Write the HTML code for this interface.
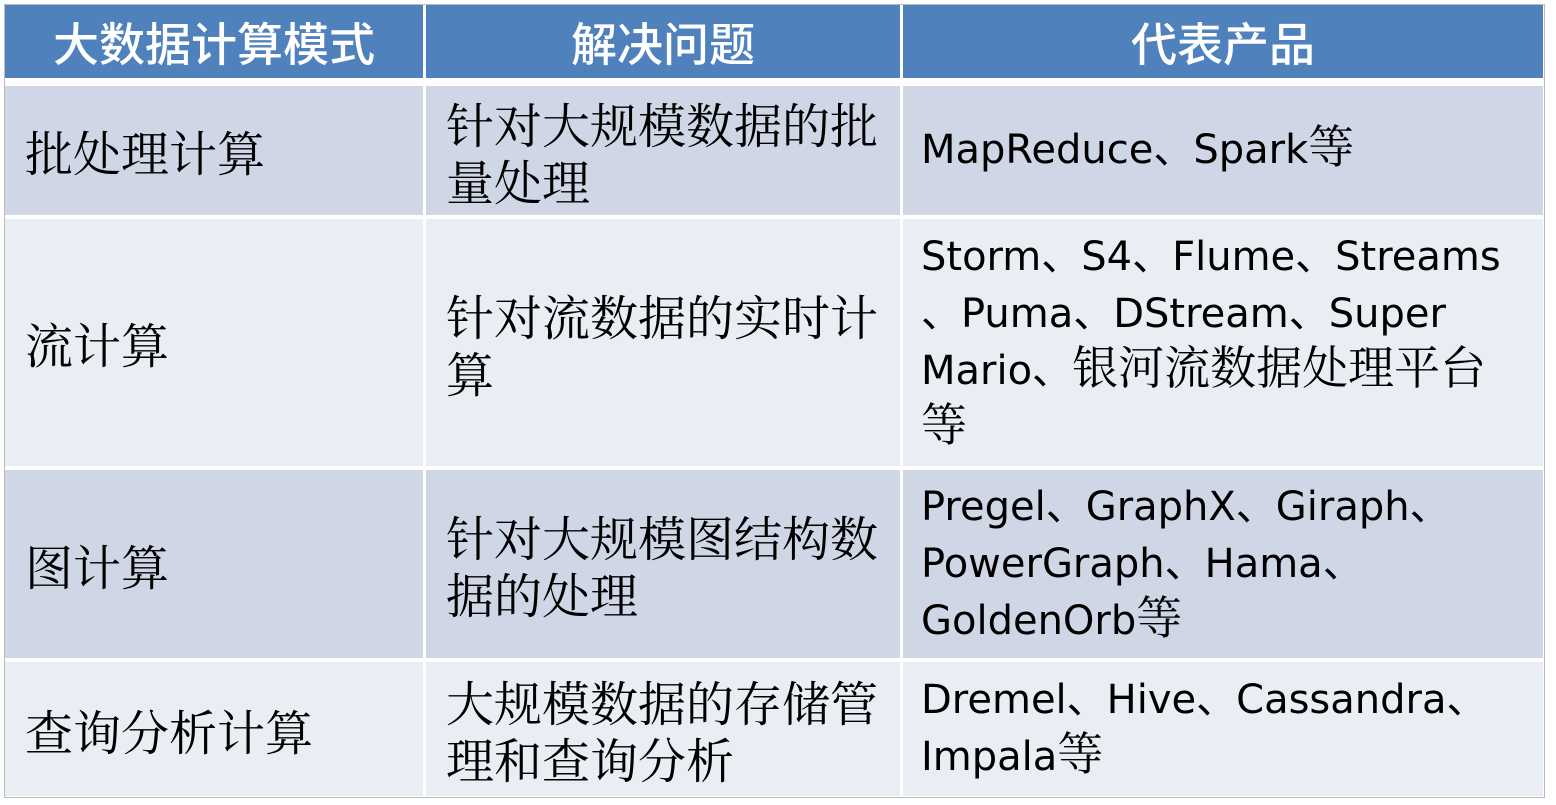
<!DOCTYPE html>
<html><head><meta charset="utf-8"><style>
body{margin:0;width:1556px;height:805px;background:#fff;position:relative;overflow:hidden}
.c{position:absolute;box-sizing:border-box;display:flex;align-items:center;color:#000}
.h{background:#4f81bd;color:#fff;justify-content:center;font-size:46px;font-family:"Noto Sans CJK SC",sans-serif;font-weight:500}
.a{background:#cfd7e7}.b{background:#e9edf4}
.z{font-family:"Noto Serif CJK SC","Noto Serif CJK JP",serif;font-size:48px;line-height:57px;padding-left:20px;white-space:nowrap}
.e{font-family:"DejaVu Sans","Noto Sans CJK SC",sans-serif;font-size:40px;line-height:57px;padding-left:18px;padding-right:10px;white-space:nowrap}
.e>div>div{height:57px;line-height:57px;overflow:visible}
.k{font-size:46px;font-family:"Noto Serif CJK SC",serif;line-height:0}
</style></head><body>
<div style="position:absolute;left:4px;top:4px;width:1541px;height:794px;border:1px solid #bbb;box-sizing:border-box"></div>
<div class="c h" style="left:5px;top:5px;width:418px;height:73px">大数据计算模式</div>
<div class="c h" style="left:426px;top:5px;width:474px;height:73px">解决问题</div>
<div class="c h" style="left:903px;top:5px;width:640px;height:73px">代表产品</div>

<div class="c a z" style="left:5px;top:86px;width:418px;height:129px">批处理计算</div>
<div class="c a z" style="left:426px;top:86px;width:474px;height:129px"><div>针对大规模数据的批<br>量处理</div></div>
<div class="c a e" style="left:903px;top:86px;width:640px;height:129px"><div><div>MapReduce、Spark<span class="k">等</span></div></div></div>

<div class="c b z" style="left:5px;top:219px;width:418px;height:247px">流计算</div>
<div class="c b z" style="left:426px;top:219px;width:474px;height:247px"><div>针对流数据的实时计<br>算</div></div>
<div class="c b e" style="left:903px;top:219px;width:640px;height:247px"><div><div>Storm、S4、Flume、Streams</div><div>、Puma、DStream、Super</div><div>Mario、<span class="k">银河流数据处理平台</span></div><div><span class="k">等</span></div></div></div>

<div class="c a z" style="left:5px;top:470px;width:418px;height:188px">图计算</div>
<div class="c a z" style="left:426px;top:470px;width:474px;height:188px"><div>针对大规模图结构数<br>据的处理</div></div>
<div class="c a e" style="left:903px;top:470px;width:640px;height:188px"><div><div>Pregel、GraphX、Giraph、</div><div>PowerGraph、Hama、</div><div>GoldenOrb<span class="k">等</span></div></div></div>

<div class="c b z" style="left:5px;top:662px;width:418px;height:134px">查询分析计算</div>
<div class="c b z" style="left:426px;top:662px;width:474px;height:134px"><div>大规模数据的存储管<br>理和查询分析</div></div>
<div class="c b e" style="left:903px;top:662px;width:640px;height:134px"><div><div>Dremel、Hive、Cassandra、</div><div>Impala<span class="k">等</span></div></div></div>
</body></html>
